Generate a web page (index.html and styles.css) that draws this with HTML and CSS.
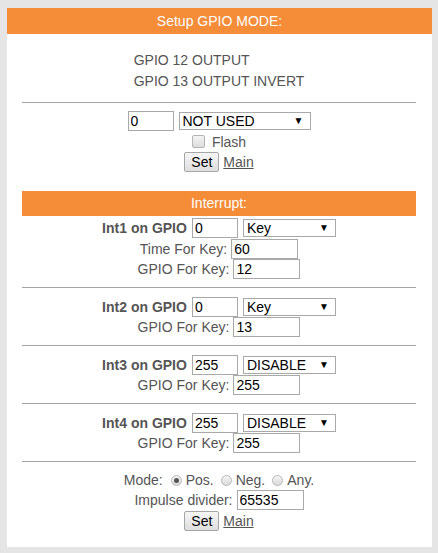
FILE: index.html
```html
<!DOCTYPE html>
<html>
<head>
<meta charset="utf-8">
<link rel="stylesheet" href="styles.css">
</head>
<body>
<div class="card">
  <div class="title">Setup GPIO MODE:</div>
  <div class="content">
    <div class="listwrap">
      <div class="list">
        <div>GPIO 12 OUTPUT</div>
        <div>GPIO 13 OUTPUT INVERT</div>
      </div>
    </div>
    <hr class="sep top">
    <div class="row h20">
      <input class="in w46" value="0">
      <span class="selbox w132"><select class="sel"><option>NOT USED</option></select><span class="arr">&#9660;</span></span>
    </div>
    <div class="row">
      <span class="chk"></span><span class="lbl">Flash</span>
    </div>
    <div class="row h20">
      <button class="btn">Set</button><a class="lnk" href="#">Main</a>
    </div>

    <div class="title inner">Interrupt:</div>
    <div class="row">
      <b class="blbl">Int1 on GPIO</b>
      <input class="in w46" value="0">
      <span class="selbox w92"><select class="sel"><option>Key</option></select><span class="arr">&#9660;</span></span>
    </div>
    <div class="row">
      <span class="lbl">Time For Key:</span><input class="in w67" value="60">
    </div>
    <div class="row h20">
      <span class="lbl">GPIO For Key:</span><input class="in w67" value="12">
    </div>
    <hr class="sep">
    <div class="row">
      <b class="blbl">Int2 on GPIO</b>
      <input class="in w46" value="0">
      <span class="selbox w92"><select class="sel"><option>Key</option></select><span class="arr">&#9660;</span></span>
    </div>
    <div class="row h20">
      <span class="lbl">GPIO For Key:</span><input class="in w67" value="13">
    </div>
    <hr class="sep">
    <div class="row">
      <b class="blbl">Int3 on GPIO</b>
      <input class="in w46" value="255">
      <span class="selbox w92"><select class="sel"><option>DISABLE</option></select><span class="arr">&#9660;</span></span>
    </div>
    <div class="row h20">
      <span class="lbl">GPIO For Key:</span><input class="in w67" value="255">
    </div>
    <hr class="sep">
    <div class="row">
      <b class="blbl">Int4 on GPIO</b>
      <input class="in w46" value="255">
      <span class="selbox w92"><select class="sel"><option>DISABLE</option></select><span class="arr">&#9660;</span></span>
    </div>
    <div class="row h20">
      <span class="lbl">GPIO For Key:</span><input class="in w67" value="255">
    </div>
    <hr class="sep">
    <div class="row h20">
      <span class="lbl">Mode:</span>
      <span class="radio first checked"></span><span class="lbl">Pos.</span>
      <span class="radio"></span><span class="lbl">Neg.</span>
      <span class="radio"></span><span class="lbl">Any.</span>
    </div>
    <div class="row h20">
      <span class="lbl">Impulse divider:</span><input class="in w67" value="65535">
    </div>
    <div class="row">
      <button class="btn">Set</button><a class="lnk" href="#">Main</a>
    </div>
  </div>
</div>
</body>
</html>
```
FILE: styles.css
```css
html, body {
  margin: 0;
  padding: 0;
  background: #e5e5e5;
}
body {
  padding: 8px 6px 6px 7px;
  font-family: "Liberation Sans", Arial, sans-serif;
  font-size: 14px;
  color: #555;
}
.card {
  width: 425px;
  height: 539px;
  background: #fff;
  box-sizing: border-box;
}
.title {
  background: #f58c38;
  color: #fff;
  text-align: center;
  height: 26px;
  line-height: 26px;
}
.title.inner {
  height: 25px;
  line-height: 25px;
  margin-top: 19px;
  margin-bottom: 1px;
}
.content {
  padding: 0 16px 0 15px;
}
.listwrap {
  display: flex;
  justify-content: center;
  padding-top: 16px;
}
.list {
  line-height: 21px;
  text-align: left;
}
.sep {
  border: 0;
  border-top: 1px solid #a3a3a3;
  height: 0;
  margin: 8px 0;
}
.sep.top {
  margin-top: 10px;
}
.row {
  display: flex;
  justify-content: center;
  align-items: center;
  height: 21px;
  white-space: nowrap;
}
.row.h20 {
  height: 20px;
}
.in {
  box-sizing: border-box;
  height: 20px;
  border: 1px solid #a9a9a9;
  padding: 0 2px;
  font-family: "Liberation Sans", Arial, sans-serif;
  font-size: 14px;
  color: #000;
  margin: 0;
  outline: none;
}
.w46 { width: 46px; }
.w67 { width: 67px; margin-left: 4px; }
.selbox {
  position: relative;
  display: inline-block;
  height: 18px;
  margin-left: 5px;
}
.w132 { width: 132px; }
.w92 { width: 93px; }
.sel {
  -webkit-appearance: none;
  appearance: none;
  box-sizing: border-box;
  width: 100%;
  height: 18px;
  border: 1px solid #a9a9a9;
  border-radius: 0;
  background: #fff;
  padding: 0 0 0 3px;
  margin: 0;
  font-family: "Liberation Sans", Arial, sans-serif;
  font-size: 14px;
  line-height: 16px;
  color: #000;
  outline: none;
}
.arr {
  position: absolute;
  right: 7px;
  top: 3px;
  font-size: 10px;
  line-height: 12px;
  color: #000;
  pointer-events: none;
}
.blbl {
  font-weight: bold;
  color: #555;
  margin-right: 5px;
}
.chk {
  display: inline-block;
  width: 11px;
  height: 11px;
  border: 1px solid #b5b5b5;
  border-radius: 2px;
  background: linear-gradient(#f4f4f4, #dcdcdc);
  margin-right: 7px;
  margin-left: 0;
}
.btn {
  box-sizing: border-box;
  height: 20px;
  padding: 0 6px;
  border: 1px solid #a6a6a6;
  border-radius: 2px;
  background: linear-gradient(#f6f6f6, #dedede);
  font-family: "Liberation Sans", Arial, sans-serif;
  font-size: 14px;
  color: #000;
  margin: 0;
}
.lnk {
  color: #555;
  text-decoration: underline;
  margin-left: 4px;
}
.radio {
  display: inline-block;
  box-sizing: border-box;
  width: 11px;
  height: 11px;
  border: 1px solid #b8b8b8;
  border-radius: 50%;
  background: linear-gradient(#f5f5f5, #dadada);
  margin: 0 4px 0 7px;
  position: relative;
}
.radio.first {
  margin-left: 8px;
}
.radio.checked::after {
  content: "";
  position: absolute;
  left: 2px;
  top: 2px;
  width: 5px;
  height: 5px;
  border-radius: 50%;
  background: #555;
}
```
